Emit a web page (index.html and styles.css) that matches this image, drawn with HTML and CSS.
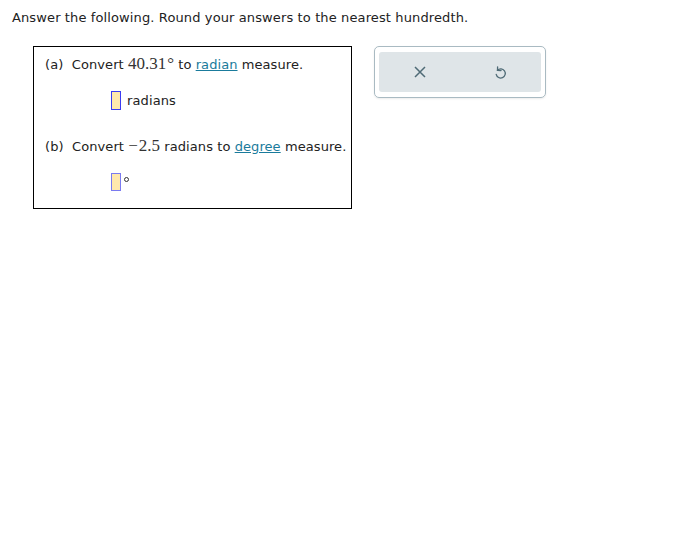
FILE: index.html
```html
<!DOCTYPE html>
<html>
<head>
<meta charset="utf-8">
<link rel="stylesheet" href="styles.css">
</head>
<body>
<div class="page">
  <p class="intro">Answer the following. Round your answers to the nearest hundredth.</p>
  <div class="row">
    <div class="question">
      <div class="line">(a)&nbsp; Convert <span class="math">40.31<span class="mdeg">°</span></span> to <a class="link" href="#">radian</a> measure.</div>
      <div class="answer a1"><span class="box"></span><span class="unit">radians</span></div>
      <div class="line b">(b)&nbsp; Convert <span class="math"><span class="minus">−</span>2.5</span> radians to <a class="link" href="#">degree</a> measure.</div>
      <div class="answer a2"><span class="box"></span><span class="deg"></span></div>
    </div>
    <div class="tools">
      <div class="tools-inner">
        <button class="tool" aria-label="clear">
          <svg width="12" height="12" viewBox="0 0 12 12"><path d="M1 1L11 11M11 1L1 11" stroke="#4f6b76" stroke-width="1.5" fill="none"/></svg>
        </button>
        <button class="tool" aria-label="undo">
          <svg width="13" height="15" viewBox="0 0 13 15"><path d="M3.4 5.2A4.6 4.6 0 1 1 2.2 9.4" stroke="#4f6b76" stroke-width="1.3" fill="none" stroke-linecap="round"/><path d="M3.6 1.8L3.5 5.4L7 5.5" stroke="#4f6b76" stroke-width="1.3" fill="none" stroke-linecap="round" stroke-linejoin="round"/></svg>
        </button>
      </div>
    </div>
  </div>
</div>
</body>
</html>
```

FILE: styles.css
```css
* { box-sizing: border-box; }
body {
  margin: 0;
  background: #fff;
  font-family: Verdana, "DejaVu Sans", sans-serif;
  font-size: 13px;
  letter-spacing: 0.12px;
  color: #222;
}
.page { padding: 10px 12px; }
.intro { margin: 0; line-height: 16px; }
.row {
  display: flex;
  align-items: flex-start;
  margin-top: 20px;
  margin-left: 21px;
  gap: 22px;
}
.question {
  width: 319px;
  height: 163px;
  border: 1px solid #000;
  padding: 9px 0 0 11px;
}
.line { line-height: 16px; white-space: nowrap; letter-spacing: 0.08px; }
.math { font-family: "Liberation Serif", "Times New Roman", serif; font-size: 17px; letter-spacing: 0; color: #333; }
.mdeg { margin-left: 1px; }
.minus { margin-right: 1px; }
.link { color: #1a7b9c; text-decoration: underline; }
.answer { display: flex; align-items: center; padding-left: 66px; }
.a1 { margin-top: 18px; }
.b { margin-top: 28px; }
.a2 { margin-top: 18px; }
.box {
  display: inline-block;
  width: 10px;
  height: 19px;
  background: #ffe8ad;
  border: 1px solid #3b3bf2;
}
.a2 .box { border-color: #7a7af0; height: 18px; }
.unit { margin-left: 6px; }
.deg {
  align-self: flex-start;
  width: 5px; height: 5px;
  border: 1px solid #333;
  border-radius: 50%;
  margin-left: 3px;
  margin-top: 4px;
}
.tools {
  width: 172px;
  height: 52px;
  border: 1px solid #a9bac2;
  border-radius: 5px;
  padding: 5px 4px;
  box-shadow: 0 1px 2px rgba(0,0,0,0.08);
}
.tools-inner {
  height: 100%;
  background: #dfe5e8;
  border-radius: 3px;
  display: flex;
}
.tool {
  flex: 1;
  border: none;
  background: transparent;
  display: flex;
  align-items: center;
  justify-content: center;
  padding: 0;
}
```
